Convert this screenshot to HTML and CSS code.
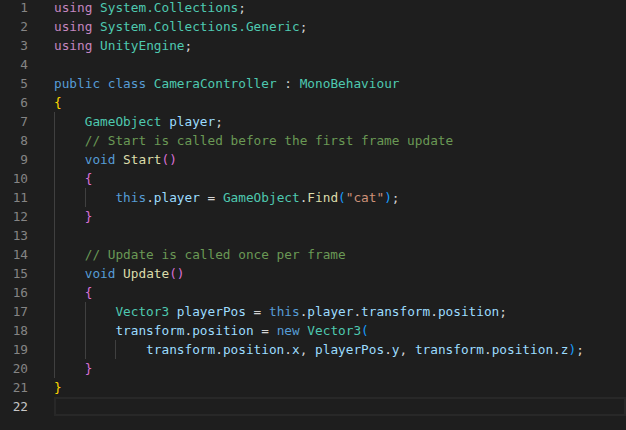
FILE: index.html
```html
<!DOCTYPE html>
<html lang="en">
<head>
  <meta charset="UTF-8">
  <title>CameraController.cs</title>
  <link rel="stylesheet" href="styles.css">
</head>
<body>
  <div class="editor">
    <div class="line"><span class="ln">1</span><span class="code"><span class="kc">using</span> <span class="ty">System.Collections</span>;</span></div>
    <div class="line"><span class="ln">2</span><span class="code"><span class="kc">using</span> <span class="ty">System.Collections.Generic</span>;</span></div>
    <div class="line"><span class="ln">3</span><span class="code"><span class="kc">using</span> <span class="ty">UnityEngine</span>;</span></div>
    <div class="line"><span class="ln">4</span><span class="code"></span></div>
    <div class="line"><span class="ln">5</span><span class="code"><span class="kw">public</span> <span class="kw">class</span> <span class="ty">CameraController</span> : <span class="ty">MonoBehaviour</span></span></div>
    <div class="line"><span class="ln">6</span><span class="code"><span class="b1">{</span></span></div>
    <div class="line"><span class="ln">7</span><span class="code"><span class="ind"></span><span class="ty">GameObject</span> <span class="var">player</span>;</span></div>
    <div class="line"><span class="ln">8</span><span class="code"><span class="ind"></span><span class="cm">// Start is called before the first frame update</span></span></div>
    <div class="line"><span class="ln">9</span><span class="code"><span class="ind"></span><span class="kw">void</span> <span class="fn">Start</span><span class="b2">()</span></span></div>
    <div class="line"><span class="ln">10</span><span class="code"><span class="ind"></span><span class="b2">{</span></span></div>
    <div class="line"><span class="ln">11</span><span class="code"><span class="ind"></span><span class="ind"></span><span class="kw">this</span>.<span class="var">player</span> = <span class="ty">GameObject</span>.<span class="fn">Find</span><span class="b3">(</span><span class="str">"cat"</span><span class="b3">)</span>;</span></div>
    <div class="line"><span class="ln">12</span><span class="code"><span class="ind"></span><span class="b2">}</span></span></div>
    <div class="line"><span class="ln">13</span><span class="code"><span class="ind"></span></span></div>
    <div class="line"><span class="ln">14</span><span class="code"><span class="ind"></span><span class="cm">// Update is called once per frame</span></span></div>
    <div class="line"><span class="ln">15</span><span class="code"><span class="ind"></span><span class="kw">void</span> <span class="fn">Update</span><span class="b2">()</span></span></div>
    <div class="line"><span class="ln">16</span><span class="code"><span class="ind"></span><span class="b2">{</span></span></div>
    <div class="line"><span class="ln">17</span><span class="code"><span class="ind"></span><span class="ind"></span><span class="ty">Vector3</span> <span class="var">playerPos</span> = <span class="kw">this</span>.<span class="var">player</span>.<span class="var">transform</span>.<span class="var">position</span>;</span></div>
    <div class="line"><span class="ln">18</span><span class="code"><span class="ind"></span><span class="ind"></span><span class="var">transform</span>.<span class="var">position</span> = <span class="kw">new</span> <span class="ty">Vector3</span><span class="b3">(</span></span></div>
    <div class="line"><span class="ln">19</span><span class="code"><span class="ind"></span><span class="ind"></span><span class="ind"></span><span class="var">transform</span>.<span class="var">position</span>.<span class="var">x</span>, <span class="var">playerPos</span>.<span class="var">y</span>, <span class="var">transform</span>.<span class="var">position</span>.<span class="var">z</span><span class="b3">)</span>;</span></div>
    <div class="line"><span class="ln">20</span><span class="code"><span class="ind"></span><span class="b2">}</span></span></div>
    <div class="line"><span class="ln">21</span><span class="code"><span class="b1">}</span></span></div>
    <div class="line current"><span class="ln">22</span><span class="code"></span></div>
  </div>
</body>
</html>
```

FILE: styles.css
```css
* {
  box-sizing: border-box;
}

body {
  margin: 0;
  background: #1e1e1e;
  color: #d4d4d4;
  font-family: 'DejaVu Sans Mono', 'Liberation Mono', monospace;
  font-size: 12.76px;
  overflow: hidden;
}

.editor {
  margin-top: -2px;
}

.line {
  display: flex;
  height: 19px;
  line-height: 19px;
}

.ln {
  width: 28px;
  flex: none;
  text-align: right;
  color: #858585;
}

.code {
  flex: 1;
  margin-left: 26px;
  white-space: pre;
}

.current .ln {
  color: #c6c6c6;
}

.current .code {
  box-shadow: inset 0 0 0 2px #282828;
}

/* indent guides */
.ind {
  display: inline-block;
  width: 4ch;
  height: 19px;
  vertical-align: top;
  box-shadow: inset 1px 0 0 #404040;
}

.kc { color: #c586c0; }
.kw { color: #569cd6; }
.ty { color: #4ec9b0; }
.var { color: #9cdcfe; }
.fn { color: #dcdcaa; }
.str { color: #ce9178; }
.cm { color: #6a9955; }

/* bracket pair colours */
.b1 { color: #ffd700; }
.b2 { color: #da70d6; }
.b3 { color: #179fff; }
```
